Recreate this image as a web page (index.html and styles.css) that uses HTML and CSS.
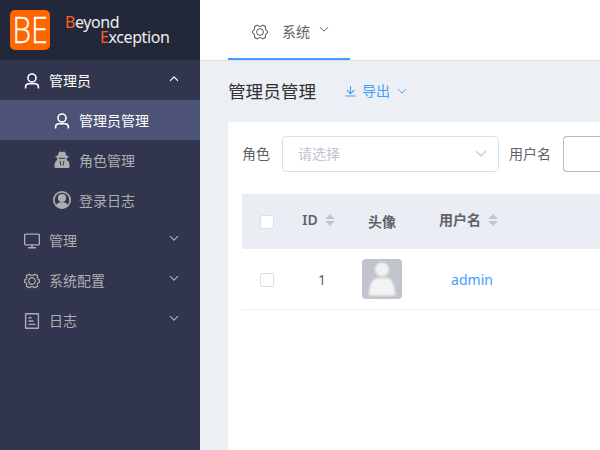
FILE: index.html
```html
<!DOCTYPE html>
<html lang="zh-CN">
<head>
<meta charset="utf-8">
<title>管理员管理</title>
<link rel="stylesheet" href="styles.css">
</head>
<body>
<svg class="defs" width="0" height="0">
  <symbol id="user" viewBox="0 0 16 16"><circle cx="8" cy="5" r="4"/><path d="M1.600 15.500v-1.300Q1.600 10.800 5 10.800h6q3.400 0 3.400 3.400v1.300"/></symbol>
  <symbol id="gear" viewBox="0 0 18 18"><path d="M5.800 1.300 7.600 2.600h2.800l1.800-1.300 3 1.700-.2 2.300 1.300 2.200 1.200.5v2l-1.200.5-1.300 2.200.2 2.300-3 1.700-1.800-1.300H7.600l-1.800 1.300-3-1.700.2-2.300-1.300-2.200L.5 10V8l1.200-.5L3 5.300 2.800 3z"/><circle cx="9" cy="9" r="3.700"/></symbol>
  <symbol id="down" viewBox="0 0 12 8"><path d="M1.200 1.200 6 6l4.800-4.800"/></symbol>
</svg>
<div class="app">
  <aside class="side">
    <div class="brand">
      <svg class="logo" viewBox="0 0 40 40"><rect width="40" height="40" rx="5"/><text x="2.600" y="33.200" textLength="35" lengthAdjust="spacingAndGlyphs">BE</text></svg>
      <div class="name"><div><b>B</b>eyond</div><div class="second"><b>E</b>xception</div></div>
    </div>
    <nav>
      <div class="item open"><svg class="ico thick"><use href="#user"/></svg><span>管理员</span><svg class="arrow up"><use href="#down"/></svg></div>
      <div class="item sub active"><svg class="ico thick"><use href="#user"/></svg><span>管理员管理</span></div>
      <div class="item sub"><svg class="ico spy" viewBox="0 0 16 18"><path class="fill" d="M3.800 4.500 4.800 1.200Q5.200.2 6.200.6L8 1.200 9.800.6q1-.4 1.400.6l1 3.300 2.300.8v1.200H13l-.3 2.200q2.800 2 2.800 5v2.100q0 1.200-1.200 1.200H1.700Q.5 17 .5 15.800v-2.100q0-3 2.800-5L3 6.500H1.500V5.300z"/><path class="cut" d="M4.800 7.300h6.400M6 9.800l1 4.700M10 9.800l-1 4.700"/></svg><span>角色管理</span></div>
      <div class="item sub"><svg class="ico big" viewBox="0 0 18 18"><circle class="fill" cx="9" cy="9" r="9"/><circle class="hole" cx="9" cy="9" r="7.300"/><circle class="fill" cx="9" cy="7" r="4.100"/><path class="fill" d="M2.800 14.400Q4.200 11.700 7 11.200h4q2.800.5 4.200 3.200Q12.700 17.200 9 17.200t-6.200-2.800"/></svg><span>登录日志</span></div>
      <div class="item"><svg class="ico" viewBox="0 0 16 16"><rect x=".6" y="1.100" width="14.800" height="10.800" rx="1.200"/><path d="M8 11.900v2.800M4 14.800h8"/></svg><span>管理</span><svg class="arrow"><use href="#down"/></svg></div>
      <div class="item"><svg class="ico"><use href="#gear"/></svg><span>系统配置</span><svg class="arrow"><use href="#down"/></svg></div>
      <div class="item"><svg class="ico" viewBox="0 0 16 16"><rect x="1.600" y=".7" width="12.800" height="14.600" rx=".5"/><path d="M4.500 4.800h3M4.500 8h5M4.500 11.400h7"/></svg><span>日志</span><svg class="arrow"><use href="#down"/></svg></div>
    </nav>
  </aside>
  <main class="main">
    <header class="top"><div class="tab"><svg class="gear"><use href="#gear"/></svg><span>系统</span><svg class="caret"><use href="#down"/></svg></div></header>
    <div class="title"><h1>管理员管理</h1>
      <a class="export"><svg class="dl" viewBox="0 0 12 12"><path d="M6 .5v8M2 5l4 4 4-4M.5 11.500h11"/></svg><span>导出</span><svg class="caret"><use href="#down"/></svg></a>
    </div>
    <section class="card">
      <div class="filters"><label>角色</label><div class="select"><span>请选择</span><svg><use href="#down"/></svg></div><label class="user-label">用户名</label><div class="input"></div></div>
      <div class="row head">
        <div><i class="check"></i></div>
        <div class="sortable">ID<svg class="sort" viewBox="0 0 10 12"><path d="M0 5 5 0l5 5zM0 7h10l-5 5z"/></svg></div>
        <div class="plain">头像</div>
        <div class="sortable">用户名<svg class="sort" viewBox="0 0 10 12"><path d="M0 5 5 0l5 5zM0 7h10l-5 5z"/></svg></div>
      </div>
      <div class="row data">
        <div><i class="check"></i></div>
        <div class="cell">1</div>
        <div><svg class="avatar" viewBox="0 0 40 40"><rect width="40" height="40" rx="4"/><g><circle cx="20" cy="10.500" r="7"/><path d="M6.500 36.500Q8 19 15.500 19h9q7.500 0 9 17.500z"/></g></svg></div>
        <div class="cell link">admin</div>
      </div>
    </section>
  </main>
</div>
</body>
</html>
```

FILE: styles.css
```css
* { box-sizing: border-box; }
body { margin: 0; width: 600px; height: 450px; overflow: hidden; font: 14px/20px "Noto Sans", "Noto Sans CJK SC", sans-serif; color: #606266; }
svg { fill: none; stroke: currentColor; stroke-width: 1.2; flex: none; }
.defs { position: absolute; }
.app { display: flex; height: 450px; }
.side { width: 200px; flex: none; background: #31354d; color: #adaeb1; }
.brand { display: flex; height: 60px; padding: 10px; background: #23273a; }
.logo { width: 40px; height: 40px; stroke: none; }
.logo text { fill: #fff; stroke: #fff; stroke-width: .3; font: 300 36px "Open Sans", sans-serif; }
.logo rect { fill: #ff6600; }
.name { margin: 5px 0 0 15px; font: 16px/15px "Noto Sans", sans-serif; color: #eee; letter-spacing: -.4px; }
.name b { font-weight: 400; color: #ff6018; }
.name .second { margin-left: 35px; }
.item { display: flex; align-items: center; height: 40px; padding: 0 20px 0 24px; }
.item span { margin-left: 9px; margin-top: 1px; }
.item.sub { padding-left: 54px; }
.item.open { color: #fff; }
.item.active { color: #fff; background: #4c5377; }
.ico { width: 16px; height: 16px; margin-top: 2px; stroke-width: 1.4; }
.ico.thick { stroke-width: 1.6; }
.ico.spy { height: 18px; margin-top: -1px; }
.ico.big { width: 18px; height: 18px; margin: 0 -1px; }
.fill { fill: currentColor; stroke: none; }
.cut { stroke: #31354d; stroke-width: 1; }
.hole { fill: #31354d; stroke: none; }
.arrow { width: 10px; height: 7px; margin: -4px 1px 0 auto; stroke-width: 1.4; }
.arrow.up { transform: rotate(180deg); }
.main { flex: 1; min-width: 0; background: #eceff4; }
.top { height: 61px; padding-left: 28px; background: #fff; border-bottom: 1px solid #dcdfe6; }
.tab { display: flex; align-items: center; width: 122px; height: 60px; padding: 6px 0 0 24px; border-bottom: 2px solid #409eff; }
.gear { width: 16px; height: 16px; }
.tab span { margin-left: 14px; }
.caret { width: 10px; height: 7px; margin: -5px 0 0 9px; }
.title { display: flex; height: 61px; padding: 0 0 2px 28px; align-items: center; }
h1 { margin: 0; font-size: 17.600px; line-height: 26px; font-weight: 400; color: #303133; }
.export { display: flex; align-items: center; margin-left: 29px; color: #409eff; }
.dl { width: 11px; height: 12px; margin-right: 6px; }
.export .caret { margin: 1px 0 0 7px; }
.card { height: 328px; margin-left: 28px; padding: 14px 0 0 14px; background: #fff; }
.filters { display: flex; height: 36px; align-items: center; white-space: nowrap; }
.select { display: flex; justify-content: space-between; align-items: center; width: 217px; height: 36px; margin-left: 12px; padding: 0 11px 0 15px; border: 1px solid #dcdfe6; border-radius: 4px; color: #c0c4cc; flex: none; }
.select svg { width: 12px; height: 8px; }
.user-label { margin-left: 10px; }
.input { flex: 1; height: 36px; margin-left: 12px; border: 1px solid #b8bbc2; border-right: 0; border-radius: 4px 0 0 4px; }
.row { display: grid; grid-template-columns: 50px 60px 60px 120px 1fr; align-items: center; }
.row > div { display: flex; align-items: center; justify-content: center; }
.head { height: 55px; margin-top: 22px; background: #eaedf4; font-weight: 600; }
.data { height: 61px; border-bottom: 1px solid #ebeef5; }
.row .cell { padding-top: 2px; }
.check { width: 14px; height: 14px; background: #fff; border: 1px solid #dcdfe6; border-radius: 2px; }
.data .check { margin-top: 2px; }
.sortable { padding-bottom: 4px; margin-left: -7px; }
.sort { width: 10px; height: 12px; margin-left: 7px; fill: #c0c4cc; stroke: none; }
.avatar { width: 40px; height: 40px; stroke: none; }
.avatar rect { fill: #c0c4cc; }
.avatar g { fill: #f3f3f3; filter: blur(.8px); }
.link { color: #409eff; }
```
